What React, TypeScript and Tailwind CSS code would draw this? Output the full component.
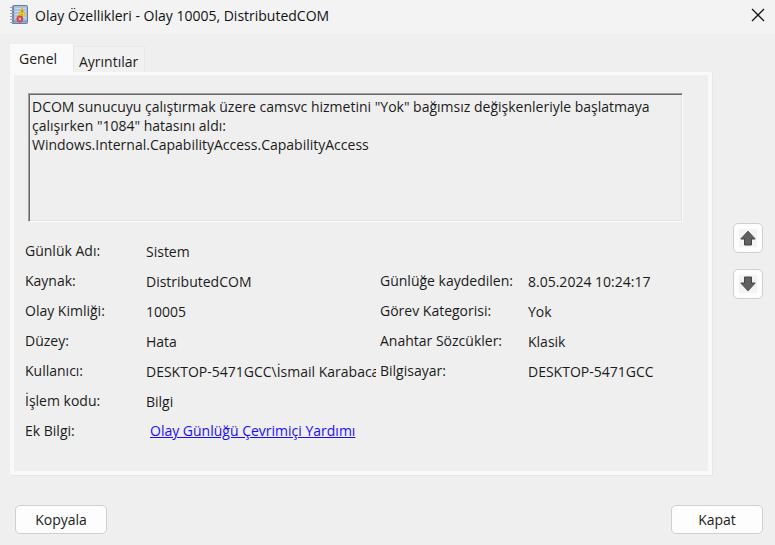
import { useState } from "react";

type Field = { label: string; value: string; href?: string };

const LEFT_FIELDS: Field[] = [
  { label: "Günlük Adı:", value: "Sistem" },
  { label: "Kaynak:", value: "DistributedCOM" },
  { label: "Olay Kimliği:", value: "10005" },
  { label: "Düzey:", value: "Hata" },
  { label: "Kullanıcı:", value: "DESKTOP-5471GCC\\İsmail Karabaca" },
  { label: "İşlem kodu:", value: "Bilgi" },
  { label: "Ek Bilgi:", value: "Olay Günlüğü Çevrimiçi Yardımı", href: "#yardim" },
];

const RIGHT_FIELDS: Field[] = [
  { label: "Günlüğe kaydedilen:", value: "8.05.2024 10:24:17" },
  { label: "Görev Kategorisi:", value: "Yok" },
  { label: "Anahtar Sözcükler:", value: "Klasik" },
  { label: "Bilgisayar:", value: "DESKTOP-5471GCC" },
];

const MESSAGE =
  'DCOM sunucuyu çalıştırmak üzere camsvc hizmetini "Yok" bağımsız değişkenleriyle başlatmaya çalışırken "1084" hatasını aldı:\nWindows.Internal.CapabilityAccess.CapabilityAccess';

function LogIcon() {
  return (
    <svg width="18" height="20" viewBox="0 0 18 20" aria-hidden="true">
      <rect x="2.5" y="0.5" width="15" height="18" rx="1" fill="#a9c0e0" stroke="#5f7cab" />
      <path d="M5 3.5h11M5 6.5h11M5 9.5h11M5 12.5h11" stroke="#c9d9ee" />
      <path d="M4 16.5h13" stroke="#7f9cc8" strokeWidth="2" />
      <path d="M3 1v18" stroke="#7889a5" strokeWidth="2" />
      <path
        d="M0 2.5h3M0 5.5h3M0 8.5h3M0 11.5h3M0 14.5h3M0 17.5h3"
        stroke="#9a9fa8"
      />
      <path d="M12 2.5l3.5 8.5h-7z" fill="#f0d532" stroke="#dcbc2c" strokeLinejoin="round" />
      <path d="M12 5v3.2M12 9v1.2" stroke="#857722" />
      <circle cx="9.8" cy="14" r="3.4" fill="#d9474c" />
      <path d="M8.6 12.8l2.4 2.4M11 12.8l-2.4 2.4" stroke="#f6d0d0" />
    </svg>
  );
}

function ArrowIcon({ down }: { down?: boolean }) {
  return (
    <svg width="18" height="18" viewBox="0 0 18 18" aria-hidden="true">
      <rect width="18" height="18" fill="#f3f3f3" />
      <path
        d={
          down
            ? "M5.5 2h7v6h3.7L9 15.8 1.8 8h3.7z"
            : "M9 2.2l7.2 7.8h-3.7v6h-7v-6H1.8z"
        }
        fill="#606060"
        stroke="#444"
        strokeLinejoin="round"
      />
    </svg>
  );
}

function FieldRow({ field, labelClass }: { field: Field; labelClass: string }) {
  return (
    <div className="flex h-[30px] items-center">
      <dt className={`${labelClass} shrink-0 whitespace-nowrap`}>{field.label}</dt>
      {field.href ? (
        <dd className="min-w-0 pl-1">
          <a href={field.href} className="whitespace-nowrap text-[#1a0dff] underline">
            {field.value}
          </a>
        </dd>
      ) : (
        <dd className="min-w-0 flex-1 overflow-hidden whitespace-nowrap pt-[2px]">
          {field.value}
        </dd>
      )}
    </div>
  );
}

export default function App() {
  const [tab, setTab] = useState("genel");

  return (
    <div className="flex min-h-screen flex-col bg-[#efefef] font-['Open_Sans','Noto_Sans',sans-serif] text-[14px] leading-[19px] text-[#1b1b1b]">
      <header className="flex h-[34px] items-center bg-[#f3f3f3] pb-[4px] pl-[10px] pr-[10px]">
        <LogIcon />
        <h1 className="ml-[7px] flex-1 text-[#111]">
          Olay Özellikleri - Olay 10005, DistributedCOM
        </h1>
        <button type="button" aria-label="Pencereyi kapat">
          <svg width="14" height="14" viewBox="0 0 14 14" aria-hidden="true">
            <path d="M1 1l12 12M13 1L1 13" stroke="#111" strokeWidth="1.3" />
          </svg>
        </button>
      </header>

      <div className="flex items-center pl-[10px] pr-[12px] pt-[10px]">
        <main className="min-w-0 flex-1">
          <div role="tablist" className="flex items-end">
            <button
              type="button"
              role="tab"
              aria-selected={tab === "genel"}
              onClick={() => setTab("genel")}
              className="h-[28px] w-[63px] bg-[#fafafa] pl-[9px] text-left"
            >
              Genel
            </button>
            <button
              type="button"
              role="tab"
              aria-selected={tab === "ayrintilar"}
              onClick={() => setTab("ayrintilar")}
              className="h-[26px] w-[72px] border border-b-0 border-[#e8e8e8] bg-[#f1f1f1] pl-[5px] pt-[3px] text-left"
            >
              Ayrıntılar
            </button>
          </div>

          <section
            role="tabpanel"
            className="border-4 border-t-[3px] border-[#f9f9f9] pb-[26px] pl-[11px] shadow-[1px_1px_0_#e6e6e6]"
          >
            <div className="pl-[3px] pr-[25px] pt-[18px]">
              <textarea
                readOnly
                aria-label="Olay açıklaması"
                value={MESSAGE}
                className="block h-[129px] w-full resize-none border border-b-[#fbfbfb] border-l-[#a0a0a0] border-r-[#fbfbfb] border-t-[#a0a0a0] px-[3px] py-[3px] shadow-[inset_1px_1px_0_#696969,inset_-1px_-1px_0_#e3e3e3] outline-none"
              />
            </div>

            <div className="mt-[13px] flex">
              <dl className="w-[351px] shrink-0">
                {LEFT_FIELDS.map((f) => (
                  <FieldRow key={f.label} field={f} labelClass="w-[121px]" />
                ))}
              </dl>
              <dl className="ml-1 min-w-0 flex-1 pt-[30px]">
                {RIGHT_FIELDS.map((f) => (
                  <FieldRow key={f.label} field={f} labelClass="w-[148px]" />
                ))}
              </dl>
            </div>
          </section>
        </main>

        <nav className="ml-[21px] flex flex-col gap-[16px] pt-[2px]">
          <button
            type="button"
            aria-label="Önceki olay"
            className="flex size-[30px] items-center justify-center rounded-[5px] border border-[#cfcfcf] bg-[#fdfdfd]"
          >
            <ArrowIcon />
          </button>
          <button
            type="button"
            aria-label="Sonraki olay"
            className="flex size-[30px] items-center justify-center rounded-[5px] border border-[#cfcfcf] bg-[#fdfdfd]"
          >
            <ArrowIcon down />
          </button>
        </nav>
      </div>

      <footer className="flex justify-between pb-[10px] pl-[15px] pr-[12px] pt-[30px]">
        <button
          type="button"
          className="h-[29px] w-[92px] rounded-[5px] border border-[#cfcfcf] bg-[#fdfdfd]"
        >
          Kopyala
        </button>
        <button
          type="button"
          className="h-[29px] w-[92px] rounded-[5px] border border-[#cfcfcf] bg-[#fdfdfd]"
        >
          Kapat
        </button>
      </footer>
    </div>
  );
}
